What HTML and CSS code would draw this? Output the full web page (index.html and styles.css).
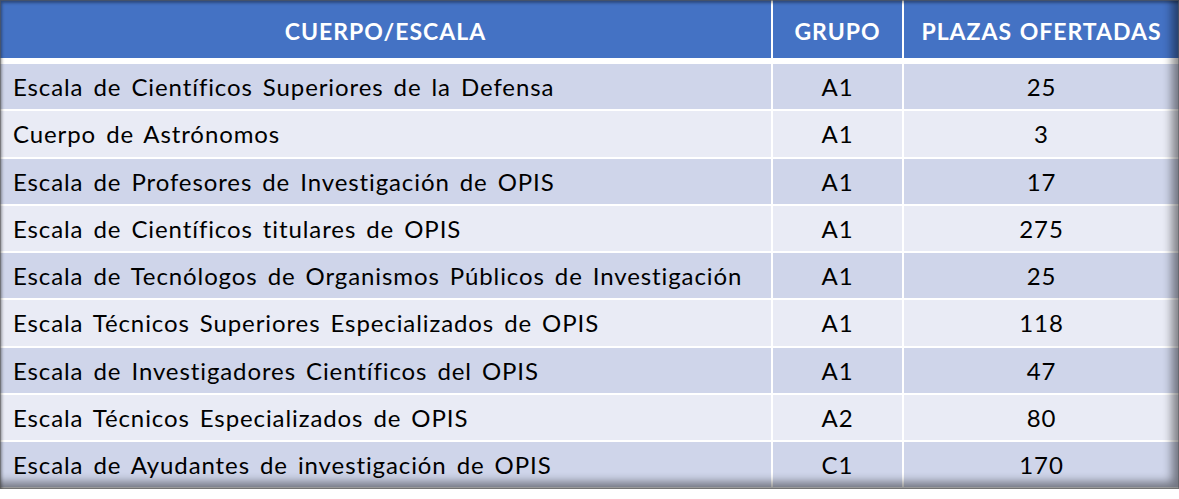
FILE: index.html
```html
<!DOCTYPE html>
<html lang="es">
<head>
<meta charset="utf-8">
<title>Plazas ofertadas</title>
<link rel="stylesheet" href="styles.css">
</head>
<body>
<div class="frame">
  <div class="grid">
    <div class="cell head">CUERPO/ESCALA</div>
    <div class="cell head">GRUPO</div>
    <div class="cell head">PLAZAS OFERTADAS</div>

    <div class="cell name odd">Escala de Científicos Superiores de la Defensa</div>
    <div class="cell num odd">A1</div>
    <div class="cell num odd">25</div>

    <div class="cell name even">Cuerpo de Astrónomos</div>
    <div class="cell num even">A1</div>
    <div class="cell num even">3</div>

    <div class="cell name odd">Escala de Profesores de Investigación de OPIS</div>
    <div class="cell num odd">A1</div>
    <div class="cell num odd">17</div>

    <div class="cell name even">Escala de Científicos titulares de OPIS</div>
    <div class="cell num even">A1</div>
    <div class="cell num even">275</div>

    <div class="cell name odd">Escala de Tecnólogos de Organismos Públicos de Investigación</div>
    <div class="cell num odd">A1</div>
    <div class="cell num odd">25</div>

    <div class="cell name even">Escala Técnicos Superiores Especializados de OPIS</div>
    <div class="cell num even">A1</div>
    <div class="cell num even">118</div>

    <div class="cell name odd">Escala de Investigadores Científicos del OPIS</div>
    <div class="cell num odd">A1</div>
    <div class="cell num odd">47</div>

    <div class="cell name even">Escala Técnicos Especializados de OPIS</div>
    <div class="cell num even">A2</div>
    <div class="cell num even">80</div>

    <div class="cell name odd">Escala de Ayudantes de investigación de OPIS</div>
    <div class="cell num odd">C1</div>
    <div class="cell num odd">170</div>
  </div>
</div>
</body>
</html>
```

FILE: styles.css
```css
html, body {
  margin: 0;
  padding: 0;
  background: #ffffff;
}

.frame {
  position: relative;
  width: 1179px;
  height: 489px;
  overflow: hidden;
  background: #ffffff;
}

.frame::after {
  content: "";
  position: absolute;
  inset: 0;
  pointer-events: none;
  box-shadow:
    inset 0 0 0 1px rgba(90, 90, 90, 0.55),
    inset 2px 3px 3px rgba(0, 0, 0, 0.35),
    inset -7px -7px 10px rgba(0, 0, 0, 0.45);
}

.grid {
  display: grid;
  grid-template-columns: 771px 129px 1fr;
  grid-template-rows: 62px repeat(9, 45.25px);
  column-gap: 2px;
  row-gap: 2px;
}

.cell {
  display: flex;
  align-items: center;
  font-family: Lato, "Open Sans", sans-serif;
  font-size: 24px;
  letter-spacing: 0.9px;
  word-spacing: 3px;
  font-variant-ligatures: none;
  color: #000000;
  white-space: nowrap;
}

.head {
  justify-content: center;
  align-self: start;
  background: #4472c4;
  color: #ffffff;
  font-weight: 700;
  font-size: 23px;
  letter-spacing: 1px;
  word-spacing: 1px;
  height: 58px;
  padding-top: 4px;
  box-sizing: border-box;
}

.name {
  padding-left: 13px;
}

.num {
  justify-content: center;
}

.odd {
  background: #cfd5ea;
}

.even {
  background: #e9ebf5;
}
```
